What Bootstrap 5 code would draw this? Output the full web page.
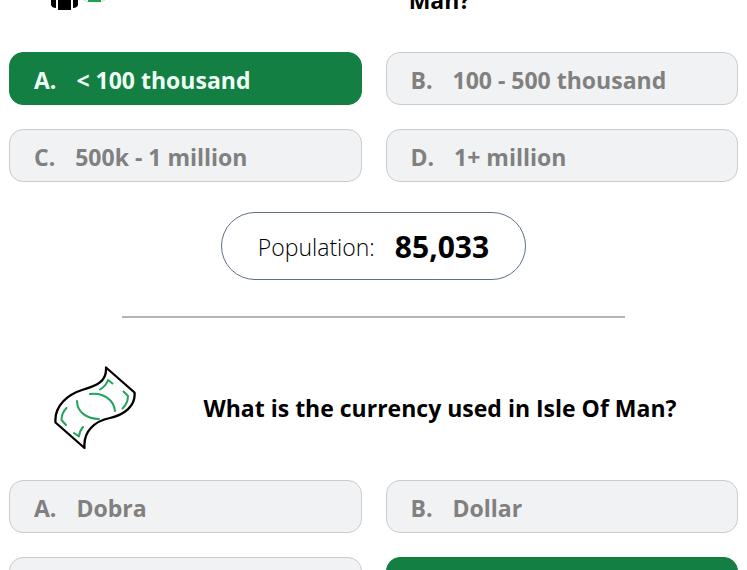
<!DOCTYPE html>
<html lang="en">
<head>
<meta charset="utf-8">
<meta name="viewport" content="width=device-width, initial-scale=1">
<title>Country quiz</title>
<link rel="stylesheet" href="https://cdn.jsdelivr.net/npm/bootstrap@5.3.0/dist/css/bootstrap.min.css">
<style>
body{font-family:"Open Sans","Noto Sans",sans-serif;color:#000;background:#fff}
.quiz{padding:0 9px}
.scrolled{height:52px;padding-bottom:36px}
.question{font-size:23px;line-height:32px;font-weight:700}
.icon-cell{flex:0 0 132px;padding-left:41px}
.answers{display:grid;grid-template-columns:1fr 1fr;gap:24px}
.answer{min-height:53px;font-size:23px;line-height:33px;font-weight:700;padding:11px 24px 7px;border:1px solid #c9cbce;border-radius:14px;background:#f1f2f4;color:#808080;text-align:left}
.answer:hover{background:#e9eaec;color:#707070;border-color:#c9cbce}
.answer.correct{background:#137f43;border-color:#137f43;color:#f0fff6}
.answer .key{margin-right:20px}
.result-row{padding-top:30px}
.result{padding:11px 36px 9px;border:1px solid #5f6f86;gap:20px;line-height:46px}
.result dt{font-size:23px;font-weight:300}
.result dd{font-size:30px;font-weight:700}
.divider{width:69%;border-top:2px solid #b5b5b5;opacity:1;margin:36px auto 0}
.header{padding:48px 0 31px}
</style>
<script src="https://cdn.jsdelivr.net/npm/bootstrap@5.3.0/dist/js/bootstrap.bundle.min.js"></script>
</head>
<body class="vh-100 overflow-hidden">
<main class="quiz">
<section>
<div class="scrolled d-flex align-items-end overflow-hidden">
<div class="icon-cell"><svg class="d-block" width="60" height="36" viewBox="0 0 60 36" aria-hidden="true">
<path d="M1 10V25Q2 28 6 28V10ZM8 10H21V30H8ZM23 10H28V25Q27 28 23 28Z" fill="#000"/><path d="M38 16H51V22H38Z" fill="#1fa05a"/><path d="M34 20L38 22M51 22L55 20" stroke="#b9e3cb" stroke-width="1"/></svg></div>
<h2 class="question flex-fill text-center mb-0">Man?</h2>
</div>
<div class="answers">
<button type="button" class="btn answer correct"><span class="key">A.</span>&lt; 100 thousand</button>
<button type="button" class="btn answer"><span class="key">B.</span>100 - 500 thousand</button>
<button type="button" class="btn answer"><span class="key">C.</span>500k - 1 million</button>
<button type="button" class="btn answer"><span class="key">D.</span>1+ million</button>
</div>
<div class="result-row d-flex justify-content-center">
<dl class="result d-flex align-items-center rounded-pill mb-0"><dt>Population:</dt><dd class="mb-0">85,033</dd></dl>
</div>
</section>
<hr class="divider">
<section>
<div class="header d-flex align-items-center">
<div class="icon-cell"><svg class="d-block" width="92" height="83" viewBox="50 366 92 83" fill="none" stroke-linecap="round" stroke-linejoin="round" aria-hidden="true">
<path d="M106 367.500L134.500 392.500C136 406 124 415 110 418C95 421 83 431 84.500 448L55.500 422.500C54 405 69 394 82 390C96 386 107 382 106 367.500Z" fill="#fff" stroke="#000" stroke-width="2.300"/>
<path d="M90 394C103 392 114 400 115 411M77 401C77 412 87 419 99 419M100 389.500Q106 386 108 380L112.500 383.500M123.500 391.500L128 396Q128 403 122.500 408.500M66.500 408Q61.500 413 61.500 420L66 425M74 433L79 436.500Q79.500 431 83 427" stroke="#23a35d" stroke-width="2"/></svg></div>
<h2 class="question flex-fill text-center mb-0">What is the currency used in Isle Of Man?</h2>
</div>
<div class="answers">
<button type="button" class="btn answer"><span class="key">A.</span>Dobra</button>
<button type="button" class="btn answer"><span class="key">B.</span>Dollar</button>
<button type="button" class="btn answer" aria-label="Answer C"></button>
<button type="button" class="btn answer correct" aria-label="Answer D"></button>
</div>
</section>
</main>
</body>
</html>
